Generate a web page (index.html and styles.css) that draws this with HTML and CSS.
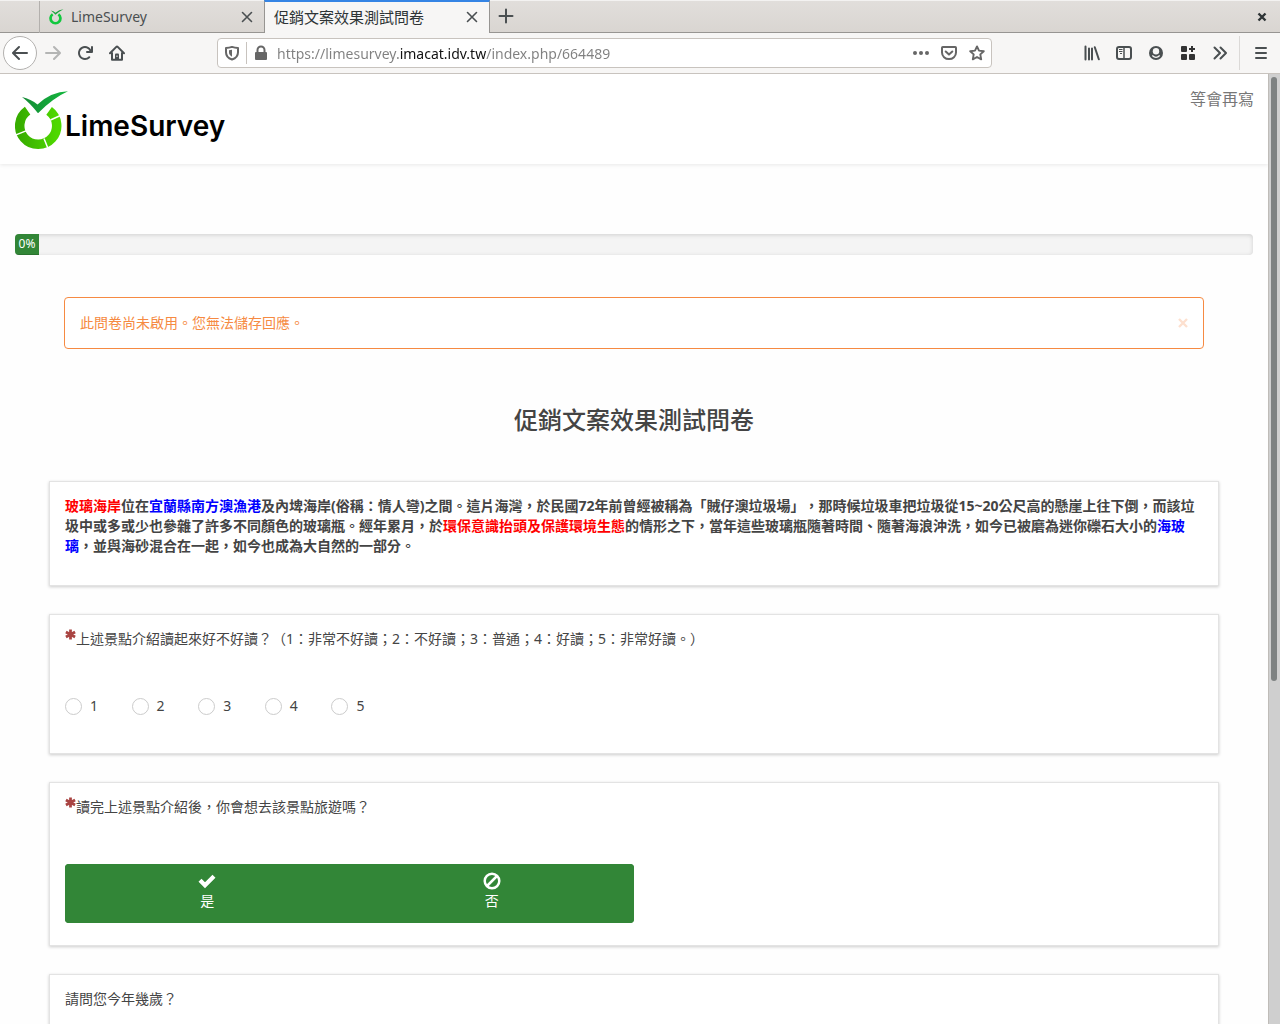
FILE: index.html
```html
<!DOCTYPE html>
<html lang="zh-Hant">
<head>
<meta charset="utf-8">
<title>促銷文案效果測試問卷</title>
<link rel="stylesheet" href="styles.css">
</head>
<body>
<svg class="defs" aria-hidden="true">
  <defs>
    <linearGradient id="ring" x1="0" y1="0" x2="1" y2="0"><stop offset="0" stop-color="#37ad00"/><stop offset="1" stop-color="#4fd800"/></linearGradient>
    <linearGradient id="leaf" x1="0" y1="0" x2="1" y2="0"><stop offset="0" stop-color="#148a35"/><stop offset="1" stop-color="#14b83e"/></linearGradient>
    <symbol id="asterisk" viewBox="0 0 12 12"><path d="M6 .5v11M1 3.200l10 5.600M11 3.200l-10 5.600" fill="none" stroke="#a94442" stroke-width="3"/></symbol>
    <symbol id="close" viewBox="0 0 16 16"><path d="M3.500 3.500l9 9M12.500 3.500l-9 9" fill="none" stroke="currentColor" stroke-width="1.600" stroke-linecap="round"/></symbol>
  </defs>
</svg>

<div class="tabstrip">
  <div class="tab">
    <svg class="favicon" viewBox="0 0 54 60"><path d="M12.600 19.700A18.500 18.500 0 1 0 34.100 19.900" fill="none" stroke="#12c83f" stroke-width="10"/><path d="M6 6Q16 8 23 14Q37 1 53 .5Q38 8 23 22Q15 13 6 6z" fill="#19a33d"/></svg>
    <span class="tab-title">LimeSurvey</span>
    <button class="tab-close" aria-label="Close tab"><svg class="icon"><use href="#close"/></svg></button>
  </div>
  <div class="tab tab-active">
    <span class="tab-title">促銷文案效果測試問卷</span>
    <button class="tab-close" aria-label="Close tab"><svg class="icon"><use href="#close"/></svg></button>
  </div>
  <button class="tool" aria-label="New tab"><svg class="icon" viewBox="0 0 16 16"><path d="M8 1.500v13M1.500 8h13" stroke="currentColor" stroke-width="2" stroke-linecap="round"/></svg></button>
  <button class="window-close" aria-label="Close window"><svg class="icon" viewBox="0 0 16 16"><path d="M4.500 4.500l7 7M11.500 4.500l-7 7" stroke="#2e3436" stroke-width="2.400"/></svg></button>
</div>

<div class="toolbar">
  <button class="back" aria-label="Back"><svg class="icon" viewBox="0 0 16 16"><path d="M15 7H3.414l4.293-4.293a1 1 0 0 0-1.414-1.414l-6 6a1 1 0 0 0 0 1.414l6 6a1 1 0 0 0 1.414-1.414L3.414 9H15a1 1 0 0 0 0-2z" fill="currentColor"/></svg></button>
  <button class="tool tool-off" aria-label="Forward"><svg class="icon" viewBox="0 0 16 16"><path d="M1 7h11.586L8.293 2.707a1 1 0 0 1 1.414-1.414l6 6a1 1 0 0 1 0 1.414l-6 6a1 1 0 0 1-1.414-1.414L12.586 9H1a1 1 0 0 1 0-2z" fill="currentColor"/></svg></button>
  <button class="tool" aria-label="Reload"><svg class="icon" viewBox="0 0 16 16"><path d="M15 1a1 1 0 0 0-1 1v2.418A6.995 6.995 0 1 0 8 15a6.954 6.954 0 0 0 4.950-2.050 1 1 0 0 0-1.414-1.414A5.019 5.019 0 1 1 12.549 6H10a1 1 0 0 0 0 2h5a1 1 0 0 0 1-1V2a1 1 0 0 0-1-1z" fill="currentColor"/></svg></button>
  <button class="tool" aria-label="Home"><svg class="icon" viewBox="0 0 16 16"><path d="M1 8.200l6.300-6.300q.7-.7 1.400 0L15 8.200M3 8v6.800h10V8" fill="none" stroke="currentColor" stroke-width="2" stroke-linecap="round" stroke-linejoin="round"/><path d="M6 14.500V9.500a1 1 0 0 1 1-1h2a1 1 0 0 1 1 1v5z" fill="currentColor"/><path d="M8 10.500v1.500" stroke="#f7f6f5"/></svg></button>
  <div class="urlbar">
    <svg class="icon" viewBox="0 0 16 16"><path d="M8 1.900C10 2.600 12 2.900 14 2.900v4.300c0 3.800-2.300 6.100-6 7.300-3.700-1.200-6-3.500-6-7.300V2.900c2 0 4-.3 6-1z" fill="none" stroke="currentColor" stroke-width="2" stroke-linejoin="round"/><path d="M8 4.800v6.900C6 10.700 5 9.400 5 7.300V5.300c1 0 2-.2 3-.5z" fill="currentColor"/></svg>
    <span class="url-divider"></span>
    <svg class="icon" viewBox="0 0 16 16"><path d="M4.500 8V5a3.500 3.500 0 0 1 7 0v3" fill="none" stroke="currentColor" stroke-width="2"/><rect x="2" y="7" width="12" height="8" rx="1" fill="currentColor"/></svg>
    <input class="url" type="text" aria-label="Address" value="https://limesurvey.imacat.idv.tw/index.php/664489">
    <button class="url-tool" aria-label="Page actions"><svg class="icon" viewBox="0 0 16 16"><g fill="currentColor"><circle cx="2" cy="8" r="2"/><circle cx="8" cy="8" r="2"/><circle cx="14" cy="8" r="2"/></g></svg></button>
    <button class="url-tool" aria-label="Pocket"><svg class="icon" viewBox="0 0 16 16"><path d="M1.800 2h12.400q.8 0 .8.800V7.500a7 6.600 0 0 1-14 0V2.800Q1 2 1.800 2zM4.700 6.500L8 9.600l3.300-3.100" fill="none" stroke="currentColor" stroke-width="2" stroke-linecap="round" stroke-linejoin="round"/></svg></button>
    <button class="url-tool" aria-label="Bookmark"><svg class="icon" viewBox="0 0 16 16"><path d="M8 1.400l2 4.200 4.800.6-3.500 3.200.9 4.900L8 12l-4.200 2.300.9-4.900L1.200 6.200 6 5.600z" fill="none" stroke="currentColor" stroke-width="1.900" stroke-linejoin="round"/></svg></button>
  </div>
  <button class="tool" aria-label="Library"><svg class="icon" viewBox="0 0 16 16"><path d="M1.500 1.500v13M5 3.500v11M8 3.500v11M10.800 2.300l4 12" fill="none" stroke="currentColor" stroke-width="2" stroke-linecap="round"/></svg></button>
  <button class="tool" aria-label="Sidebar"><svg class="icon" viewBox="0 0 16 16"><path d="M3 2h10a2 2 0 0 1 2 2v8a2 2 0 0 1-2 2H3a2 2 0 0 1-2-2V4a2 2 0 0 1 2-2z" fill="none" stroke="currentColor" stroke-width="2"/><path d="M8 2v12" stroke="currentColor" stroke-width="1.500"/><path d="M3 4.500h3.500M3 6.500h3.500M4 8.500h2" stroke="currentColor"/></svg></button>
  <button class="tool" aria-label="Account"><svg class="icon" viewBox="0 0 16 16"><circle cx="8" cy="8" r="7" fill="currentColor"/><circle cx="8" cy="6.300" r="3.200" fill="#f7f6f5"/><path d="M4.300 10.500Q6 12.300 8 12.300T11.700 10.500" fill="none" stroke="#f7f6f5" stroke-width="1.300"/></svg></button>
  <button class="tool tool-dark" aria-label="Extensions"><svg class="icon" viewBox="0 0 16 16"><g fill="currentColor"><rect x="1" y="1" width="6" height="6" rx="1"/><rect x="1" y="9" width="6" height="6" rx="1"/><rect x="9" y="9" width="6" height="6" rx="1"/><path d="M11 1h2v2h2v2h-2v2h-2V5H9V3h2z"/></g></svg></button>
  <button class="tool" aria-label="More tools"><svg class="icon" viewBox="0 0 16 16"><path d="M2.500 2.500L8 8l-5.500 5.500M8.500 2.500L14 8l-5.500 5.500" fill="none" stroke="currentColor" stroke-width="2" stroke-linecap="round" stroke-linejoin="round"/></svg></button>
  <span class="tool-divider"></span>
  <button class="tool" aria-label="Menu"><svg class="icon" viewBox="0 0 16 16"><path d="M3 3h10M3 8h10M3 13h10" stroke="currentColor" stroke-width="2" stroke-linecap="round"/></svg></button>
</div>

<div class="viewport">
  <div class="page">
    <header class="navbar">
      <a class="brand" href="#">
        <svg class="logo" viewBox="0 0 54 60">
          <path d="M12.600 19.700A18.500 18.500 0 1 0 34.100 19.900" fill="none" stroke="url(#ring)" stroke-width="9.500"/>
          <path d="M35.500 29l11-5M1 43.900l10-4M29 47.500l4 10" stroke="#fff" stroke-width="1.500"/>
          <path d="M7 6Q16 8 22.500 13.500Q36 .8 53 .3Q38 7 23 22.300Q15 12 7 6z" fill="url(#leaf)"/>
        </svg>
        <span class="brand-name">LimeSurvey</span>
      </a>
      <a class="nav-link" href="#">等會再寫</a>
    </header>

    <div class="progress"><div class="progress-bar">0%</div></div>

    <main class="survey">
      <div class="alert" role="alert">
        <span>此問卷尚未啟用。您無法儲存回應。</span>
        <button class="alert-close" aria-label="Close"><svg class="alert-x" viewBox="0 0 10 10"><path d="M1 1l8 8M9 1l-8 8" stroke="currentColor" stroke-width="2.400"/></svg></button>
      </div>

      <h1 class="title">促銷文案效果測試問卷</h1>

      <section class="card">
        <p class="intro"><span class="red">玻璃海岸</span>位在<span class="blue">宜蘭縣南方澳漁港</span>及內埤海岸(俗稱：情人彎)之間。這片海灣，於民國72年前曾經被稱為「賊仔澳垃圾場」，那時候垃圾車把垃圾從15~20公尺高的懸崖上往下倒，而該垃圾中或多或少也參雜了許多不同顏色的玻璃瓶。經年累月，於<span class="red">環保意識抬頭及保護環境生態</span>的情形之下，當年這些玻璃瓶隨著時間、隨著海浪沖洗，如今已被磨為迷你礫石大小的<span class="blue">海玻璃</span>，並與海砂混合在一起，如今也成為大自然的一部分。</p>
      </section>

      <section class="card">
        <p class="question"><svg class="required"><use href="#asterisk"/></svg><span>上述景點介紹讀起來好不好讀？（1：非常不好讀；2：不好讀；3：普通；4：好讀；5：非常好讀。）</span></p>
        <div class="scale">
          <label class="choice"><input class="radio" type="radio" name="rating">1</label>
          <label class="choice"><input class="radio" type="radio" name="rating">2</label>
          <label class="choice"><input class="radio" type="radio" name="rating">3</label>
          <label class="choice"><input class="radio" type="radio" name="rating">4</label>
          <label class="choice"><input class="radio" type="radio" name="rating">5</label>
        </div>
      </section>

      <section class="card">
        <p class="question"><svg class="required"><use href="#asterisk"/></svg><span>讀完上述景點介紹後，你會想去該景點旅遊嗎？</span></p>
        <div class="yesno">
          <button class="answer"><svg class="answer-icon" viewBox="0 0 18 18"><path d="M2 8.300l5 5L16 4.300" fill="none" stroke="#fff" stroke-width="4.200"/></svg>是</button>
          <button class="answer"><svg class="answer-icon" viewBox="0 0 18 18"><circle cx="9" cy="9" r="7.300" fill="none" stroke="#fff" stroke-width="2.500"/><path d="M4 14L14 4" stroke="#fff" stroke-width="2.500"/></svg>否</button>
        </div>
      </section>

      <section class="card">
        <p class="question"><label for="age">請問您今年幾歲？</label></p>
        <input class="age" id="age" type="text">
      </section>
    </main>
  </div>
  <div class="scrollbar"><div class="thumb"></div></div>
</div>
</body>
</html>
```

FILE: styles.css
```css
* { box-sizing: border-box; }

body {
  margin: 0;
  height: 100vh;
  display: flex;
  flex-direction: column;
  overflow: hidden;
  font-family: "Noto Sans", "Noto Sans CJK TC", sans-serif;
  font-size: 14px;
  line-height: 20px;
  color: #444;
  background: #fff;
  text-spacing-trim: space-all;
}

button {
  display: flex;
  align-items: center;
  justify-content: center;
  padding: 0;
  border: 0;
  background: none;
  color: inherit;
  font: inherit;
}

p, h1 { margin: 0; }

.defs { position: absolute; width: 0; height: 0; }
.icon { width: 16px; height: 16px; flex: none; display: block; }

/* Tabs */
.tabstrip {
  display: flex;
  flex: none;
  height: 33px;
  padding-left: 39px;
  color: #4a4f51;
  background: linear-gradient(#e1dedb, #d9d5d1);
  border-top: 1px solid #f3f2f1;
  box-shadow: inset 0 -1px #979592;
}

.tab {
  display: flex;
  align-items: center;
  width: 225px;
  padding: 0 9px;
  border-left: 1px solid #b3b0ad;
}

.tab-active {
  margin-top: -1px;
  width: 226px;
  padding-bottom: 2px;
  color: #2e3436;
  background: #f7f6f5;
  border: 1px solid #979592;
  border-top: 2px solid #3584e4;
  border-bottom: 0;
  font-size: 15px;
}

.favicon { width: 15px; height: 16px; margin-right: 7px; }
.tab-title { flex: 1; }
.tab-close { width: 16px; height: 16px; color: #4a4f51; }
.tabstrip > .tool { height: 30px; }
.window-close { margin-left: auto; width: 36px; height: 32px; }

/* Toolbar */
.toolbar {
  display: flex;
  align-items: center;
  flex: none;
  height: 41px;
  padding: 0 3px;
  color: #4a4f51;
  background: #f7f6f5;
  border-bottom: 1px solid #c8c3be;
}

.back {
  width: 34px;
  height: 34px;
  border: 1px solid #b3b1af;
  border-radius: 50%;
  background: #fff;
}

.tool { width: 32px; height: 32px; }
.tool-off { color: #b4b5b4; }
.tool-dark { color: #333; }
.tool-divider { width: 1px; height: 34px; margin: 0 5px 0 3px; background: #dbd9d7; }

.urlbar {
  display: flex;
  align-items: center;
  flex: 1;
  height: 30px;
  margin: 0 84px;
  padding: 0 5px 0 6px;
  color: #666;
  background: #fff;
  border: 1px solid #c8c3be;
  border-radius: 4px;
}

.url-divider { width: 1px; height: 22px; margin: 0 6px; background: #c8c3be; }

/* The gradient stops fall on both ends of the domain name */
.url {
  flex: 1;
  min-width: 0;
  height: 24px;
  margin-left: 8px;
  padding: 0;
  border: 0;
  outline: 0;
  font: inherit;
  color: transparent;
  background: linear-gradient(to right, #808080 122px, #111 122px, #111 209px, #808080 209px);
  -webkit-background-clip: text;
  background-clip: text;
}

.url-tool { width: 28px; height: 28px; }
.url-tool:last-child { width: 16px; margin: 0 1px 0 6px; }

/* Page area */
.viewport { display: flex; flex: 1; min-height: 0; }
.page { flex: 1; overflow: hidden; background: #fefefe; }

.scrollbar {
  width: 12px;
  padding: 3px 3px 3px 2px;
  background: #cfcfcf;
  border-left: 1px solid #bfbcb8;
}

.thumb { height: 64%; border-radius: 3px; background: #7e8282; }

.navbar {
  display: flex;
  align-items: flex-start;
  justify-content: space-between;
  height: 90px;
  padding: 15px 14px 13px 15px;
  background: #fff;
  box-shadow: 0 1px 4px rgba(0, 0, 0, .09);
}

.brand { display: flex; align-items: center; color: #000; text-decoration: none; }
.logo { width: 54px; height: 60px; margin-top: 2px; }
.brand-name {
  margin: 11px 0 0 -4px;
  font: 600 28px/36px Inter, sans-serif;
}
.nav-link { font-size: 16px; color: #777; text-decoration: none; }

.progress {
  height: 21px;
  margin: 70px 15px 42px;
  overflow: hidden;
  background: #f4f4f4;
  border-radius: 4px;
  box-shadow: inset 0 1px 4px rgba(0, 0, 0, .15);
}

.progress-bar {
  width: 24px;
  height: 21px;
  color: #fff;
  background: #328637;
  box-shadow: inset 0 -1px rgba(0, 0, 0, .15);
  font-size: 12px;
  text-align: center;
}

.survey { padding: 0 49px; }

.alert {
  display: flex;
  align-items: center;
  justify-content: space-between;
  margin: 0 15px;
  padding: 15px;
  color: #f68a42;
  background: #fff;
  border: 1px solid #f68a42;
  border-radius: 4px;
}

.alert-close { width: 10px; height: 10px; color: #fde0cf; }
.alert-x { width: 10px; height: 10px; }

.title {
  margin: 53px 0 44px;
  font-size: 24px;
  font-weight: 500;
  line-height: 35px;
  text-align: center;
}

.card {
  margin-bottom: 28px;
  padding: 14px 15px 0;
  background: #fff;
  border: 1px solid #e3e3e3;
  box-shadow: 0 1px 3px rgba(0, 0, 0, .2);
}

.intro { padding-bottom: 29px; font-weight: 700; }
.red { color: #f00; }
.blue { color: #00f; }

.question { display: flex; align-items: flex-start; }
.required { flex: none; width: 11px; height: 11px; }

.scale {
  display: grid;
  grid-template-columns: repeat(5, 1fr);
  width: 333px;
  padding: 47px 0 37px;
}
.choice { display: flex; align-items: center; gap: 8px; }
.radio {
  appearance: none;
  width: 17px;
  height: 17px;
  margin: 0;
  border: 1px solid #ccc;
  border-radius: 50%;
  background: #fff;
}

.yesno { display: flex; width: 50%; margin: 47px 0 22px; overflow: hidden; border-radius: 4px; }
.yesno, .answer { background: #328637; }
.answer { flex: 1; flex-direction: column; gap: 1px; height: 59px; padding-bottom: 5px; color: #fff; }
.answer-icon { width: 18px; height: 18px; }

.age { width: 50%; height: 34px; margin: 47px 0 22px; border: 1px solid #ccc; border-radius: 4px; }
```
